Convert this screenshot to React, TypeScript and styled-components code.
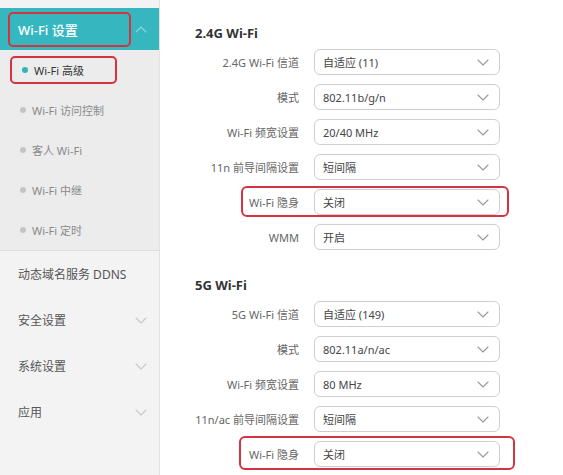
import React from "react";
import styled, { createGlobalStyle } from "styled-components";

const Global = createGlobalStyle`
  html, body { margin: 0; padding: 0; background: #fff; }
  body { font-family: "Noto Sans", "Noto Sans CJK SC", sans-serif; }
`;

const Page = styled.div`
  display: flex;
  width: 563px;
  height: 475px;
  overflow: hidden;
`;

const Sidebar = styled.nav`
  width: 160px;
  flex-shrink: 0;
  display: flex;
  flex-direction: column;
  padding-top: 8px;
  background: #f3f3f3;
  border-right: 1px solid #e2e2e2;
  box-sizing: border-box;
`;

const TopBar = styled.div`
  height: 42px;
  background: #36b7bf;
  display: flex;
  align-items: center;
  justify-content: space-between;
  padding: 0 12px 0 8px;
`;

const Annotated = styled.div<{ $w: number; $h: number }>`
  width: ${(p) => p.$w}px;
  height: ${(p) => p.$h}px;
  box-sizing: border-box;
  border: 2px solid #d3343f;
  border-radius: 5px;
  display: flex;
  align-items: center;
`;

const TopTitle = styled.span`
  color: #fff;
  font-size: 13px;
  font-weight: 500;
  padding-left: 8px;
`;

const SubMenu = styled.div`
  background: #ececec;
  display: flex;
  flex-direction: column;
  border-bottom: 1px solid #dedede;
`;

const SubItem = styled.div`
  height: 40px;
  display: flex;
  align-items: center;
  padding-left: 10px;
`;

const SubLabel = styled.span<{ $active?: boolean }>`
  display: flex;
  align-items: center;
  gap: 6px;
  padding-left: 10px;
  font-size: 11px;
  color: ${(p) => (p.$active ? "#333" : "#8a8a8a")};
`;

const Dot = styled.span<{ $active?: boolean }>`
  width: 6px;
  height: 6px;
  border-radius: 50%;
  background: ${(p) => (p.$active ? "#2fb3bd" : "#c4c4c4")};
`;

const MenuItem = styled.div`
  height: 46px;
  display: flex;
  align-items: center;
  justify-content: space-between;
  padding: 0 12px 0 18px;
  font-size: 12px;
  color: #555;
`;

const Main = styled.main`
  flex: 1;
  padding: 24px 0 0 19px;
  display: flex;
  flex-direction: column;
`;

const Heading = styled.h2`
  margin: 0;
  font-size: 13px;
  font-weight: 700;
  color: #333;
  line-height: 18px;
  padding-left: 16px;
`;

const Rows = styled.div<{ $top: number }>`
  display: flex;
  flex-direction: column;
  gap: 9px;
  margin-top: ${(p) => p.$top}px;
`;

const Row = styled.div`
  position: relative;
  width: 321px;
  display: grid;
  grid-template-columns: 120px 186px;
  column-gap: 15px;
  align-items: center;
  height: 26px;
`;

const Highlight = styled.span<{ $l: number; $r: number; $t: number; $b: number }>`
  position: absolute;
  left: ${(p) => p.$l}px;
  right: ${(p) => p.$r}px;
  top: ${(p) => p.$t}px;
  bottom: ${(p) => p.$b}px;
  border: 2px solid #d3343f;
  border-radius: 6px;
  pointer-events: none;
`;

const Label = styled.span`
  text-align: right;
  font-size: 11px;
  color: #666;
  white-space: nowrap;
`;

const Select = styled.div`
  height: 26px;
  box-sizing: border-box;
  border: 1px solid #cfcfcf;
  border-radius: 6px;
  background: #fff;
  display: flex;
  align-items: center;
  justify-content: space-between;
  padding: 0 10px 0 8px;
  font-size: 11px;
  color: #444;
`;

const Section = styled.section<{ $top: number }>`
  margin-top: ${(p) => p.$top}px;
`;

const Chevron = ({ up, color = "#9a9a9a" }: { up?: boolean; color?: string }) => (
  <svg width="12" height="7" viewBox="0 0 12 7" fill="none">
    <path
      d={up ? "M1 6 L6 1 L11 6" : "M1 1 L6 6 L11 1"}
      stroke={color}
      strokeWidth="1.1"
      strokeLinecap="round"
      strokeLinejoin="round"
    />
  </svg>
);

type Field = { label: string; value: string; hl?: [number, number, number, number] };

const wifi24: Field[] = [
  { label: "2.4G Wi-Fi 信道", value: "自适应 (11)" },
  { label: "模式", value: "802.11b/g/n" },
  { label: "Wi-Fi 频宽设置", value: "20/40 MHz" },
  { label: "11n 前导间隔设置", value: "短间隔" },
  { label: "Wi-Fi 隐身", value: "关闭", hl: [62, -9, -3, -2] },
  { label: "WMM", value: "开启" },
];

const wifi5: Field[] = [
  { label: "5G Wi-Fi 信道", value: "自适应 (149)" },
  { label: "模式", value: "802.11a/n/ac" },
  { label: "Wi-Fi 频宽设置", value: "80 MHz" },
  { label: "11n/ac 前导间隔设置", value: "短间隔" },
  { label: "Wi-Fi 隐身", value: "关闭", hl: [60, -15, -5, -3] },
];

const FieldRows = ({ items, top }: { items: Field[]; top: number }) => (
  <Rows $top={top}>
    {items.map((f, i) => (
      <Row key={i}>
        <Label>{f.label}</Label>
        <Select>
          <span>{f.value}</span>
          <Chevron />
        </Select>
        {f.hl && <Highlight $l={f.hl[0]} $r={f.hl[1]} $t={f.hl[2]} $b={f.hl[3]} />}
      </Row>
    ))}
  </Rows>
);

const subItems = ["Wi-Fi 高级", "Wi-Fi 访问控制", "客人 Wi-Fi", "Wi-Fi 中继", "Wi-Fi 定时"];

export default function App() {
  return (
    <>
      <Global />
      <Page>
        <Sidebar>
          <TopBar>
            <Annotated $w={123} $h={35}>
              <TopTitle>Wi-Fi 设置</TopTitle>
            </Annotated>
            <Chevron up color="#8fd6db" />
          </TopBar>
          <SubMenu>
            {subItems.map((s, i) => (
              <SubItem key={s}>
                {i === 0 ? (
                  <Annotated $w={107} $h={28}>
                    <SubLabel $active>
                      <Dot $active />
                      {s}
                    </SubLabel>
                  </Annotated>
                ) : (
                  <SubLabel>
                    <Dot />
                    {s}
                  </SubLabel>
                )}
              </SubItem>
            ))}
          </SubMenu>
          <MenuItem>动态域名服务 DDNS</MenuItem>
          <MenuItem>
            安全设置
            <Chevron color="#c8c8c8" />
          </MenuItem>
          <MenuItem>
            系统设置
            <Chevron color="#c8c8c8" />
          </MenuItem>
          <MenuItem>
            应用
            <Chevron color="#c8c8c8" />
          </MenuItem>
        </Sidebar>
        <Main>
          <Section $top={0}>
            <Heading>2.4G Wi-Fi</Heading>
            <FieldRows items={wifi24} top={7} />
          </Section>
          <Section $top={26}>
            <Heading>5G Wi-Fi</Heading>
            <FieldRows items={wifi5} top={7} />
          </Section>
        </Main>
      </Page>
    </>
  );
}
